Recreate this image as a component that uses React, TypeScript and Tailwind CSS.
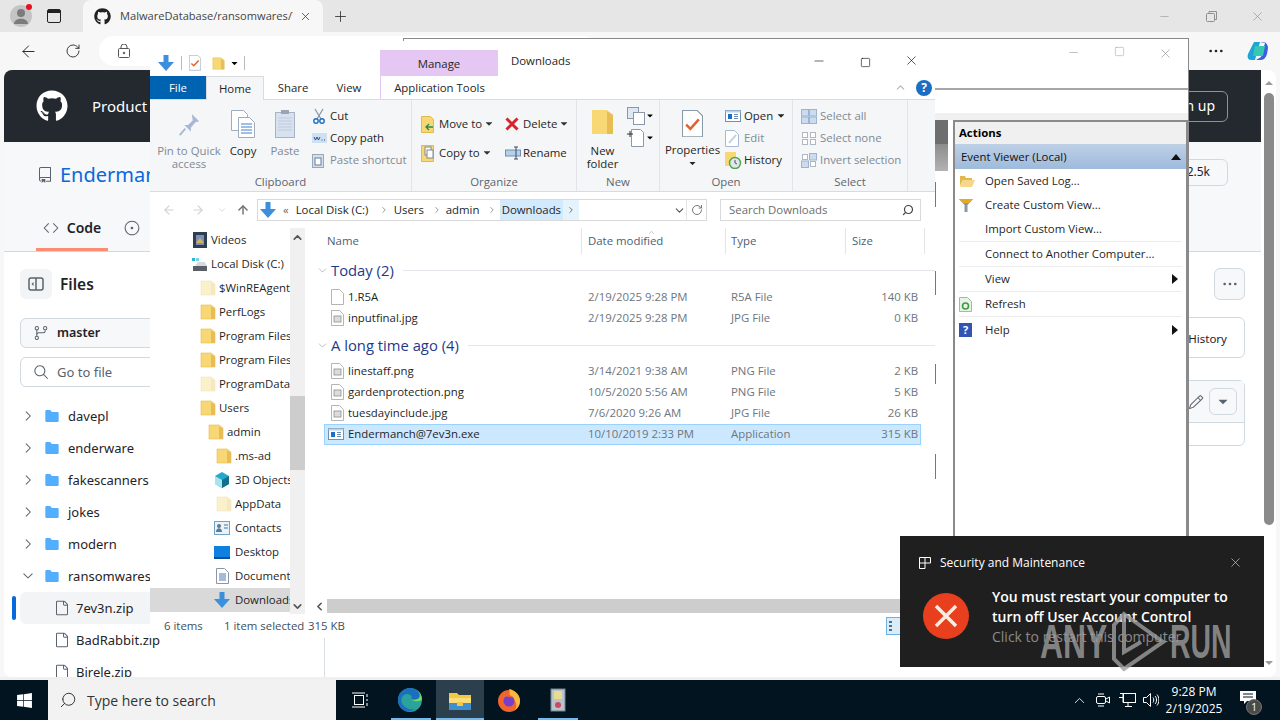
import type { ReactNode } from 'react';
import { ArrowLeft, ArrowRight, ArrowUp, ChevronDown, ChevronLeft, ChevronRight, ChevronUp, Minus, Plus, RotateCw, Search, Square, X } from 'lucide-react';
import { FaGithub, FaWindows } from 'react-icons/fa';
import { GoChevronDown, GoChevronRight, GoCode, GoFile, GoFileDirectoryFill, GoGitBranch, GoIssueOpened, GoKebabHorizontal, GoPencil, GoRepo, GoSearch, GoTriangleDown } from 'react-icons/go';

const Folder = ({ pale = false, size = 16 }: { pale?: boolean; size?: number }) => (
  <svg width={size} height={size} viewBox="0 0 16 16" className="shrink-0">
    <path d="M1 1h10l4 3v11H1z" fill={pale ? '#fbf0cc' : '#f8d775'} stroke={pale ? '#f1e4b8' : '#e5bd55'} strokeWidth="0.6" />
    <path d="M11 2v13h4V5z" fill={pale ? '#f6e8bc' : '#e9bd56'} />
  </svg>
);

const ImageFile = () => (
  <svg width="13" height="16" viewBox="0 0 13 16" className="shrink-0">
    <path d="M.5.5h8l4 4v11H.5z" fill="#fff" stroke="#b5b5b5" />
    <rect x="3" y="6" width="7" height="6" fill="#dcdcdc" stroke="#8e8e8e" strokeWidth="0.8" />
  </svg>
);

const BlankFile = () => (
  <svg width="13" height="16" viewBox="0 0 13 16" className="shrink-0">
    <path d="M.5.5h8l4 4v11H.5z" fill="#fff" stroke="#b5b5b5" />
  </svg>
);

const ExeFile = () => (
  <svg width="16" height="14" viewBox="0 0 16 14" className="shrink-0">
    <rect x="0.5" y="1.5" width="15" height="11" fill="#fff" stroke="#6f8fb5" />
    <rect x="0.5" y="1.5" width="15" height="2" fill="#b9d1ea" />
    <rect x="3" y="5" width="4" height="5" fill="#1c6fc9" />
    <path d="M9 5.5h4M9 7.5h4M9 9.5h4" stroke="#6d8bb0" />
  </svg>
);

const BlueDown = ({ size = 16 }: { size?: number }) => (
  <svg width={size} height={size} viewBox="0 0 16 16" className="shrink-0">
    <path d="M5.5 0h5v7H16l-8 9-8-9h5.5z" fill="#3b8fdc" />
  </svg>
);

const Props = ({ size = 16 }: { size?: number }) => (
  <svg width={size} height={size * 1.3} viewBox="0 0 20 26" className="shrink-0">
    <path d="M.5.5h14l5 5v20H.5z" fill="#fff" stroke="#8b9aa8" />
    <path d="M4 14l4 4 8-9" fill="none" stroke="#e2622b" strokeWidth="2.4" />
  </svg>
);

const Small = ({ kind }: { kind: string }) => {
  const c = 'shrink-0';
  if (kind === 'cut') return <svg width="14" height="16" viewBox="0 0 14 16" className={c}><path d="M3 1l6 10M11 1L5 11" stroke="#8793a0" strokeWidth="1.2" /><circle cx="4" cy="13" r="2.2" fill="none" stroke="#1d6fc2" strokeWidth="1.4" /><circle cx="10" cy="13" r="2.2" fill="none" stroke="#1d6fc2" strokeWidth="1.4" /></svg>;
  if (kind === 'path') return <svg width="15" height="10" viewBox="0 0 15 10" className={c}><rect width="15" height="10" fill="#cfe0f3" /><path d="M2 4l1.5 3L5 4l1.5 3L8 4M9.5 7h1M12 7h1" stroke="#274f7f" fill="none" /></svg>;
  if (kind === 'shortcut') return <svg width="12" height="15" viewBox="0 0 12 15" className={c}><rect x=".5" y="1.5" width="11" height="13" fill="#d8dfe7" stroke="#9aa7b5" /><rect x="3" y="5" width="6" height="7" fill="#fff" stroke="#5b7ea8" /></svg>;
  if (kind === 'move') return <svg width="13" height="17" viewBox="0 0 13 17" className={c}><path d="M.5.5h9l3 3v13H.5z" fill="#f8d775" stroke="#e0b94f" /><path d="M12 11H6M8 8l-3 3 3 3" stroke="#2d8a4e" strokeWidth="1.4" fill="none" /></svg>;
  if (kind === 'copy') return <svg width="13" height="17" viewBox="0 0 13 17" className={c}><path d="M.5.5h12v16H.5z" fill="#f8d775" stroke="#e0b94f" /><rect x="4" y="2" width="6" height="8" fill="#fff" stroke="#7c8a99" /><rect x="6" y="5" width="6" height="8" fill="#fff" stroke="#7c8a99" /></svg>;
  if (kind === 'delete') return <svg width="14" height="14" viewBox="0 0 14 14" className={c}><path d="M1.5 1.5l11 11M12.5 1.5l-11 11" stroke="#d8232a" strokeWidth="3" /></svg>;
  if (kind === 'rename') return <svg width="16" height="14" viewBox="0 0 16 14" className={c}><rect x=".5" y="4" width="15" height="6" fill="#b7cfe8" stroke="#6e8fb3" /><path d="M11 1v12M9 1h4M9 13h4" stroke="#3a4a5a" /></svg>;
  if (kind === 'open') return <ExeFile />;
  if (kind === 'edit') return <svg width="15" height="17" viewBox="0 0 15 17" className={c}><path d="M.5.5h9l4 4v12H.5z" fill="#fff" stroke="#a7bad0" /><path d="M4 13l7-8" stroke="#c6d5e5" strokeWidth="2" /></svg>;
  if (kind === 'history') return <svg width="17" height="17" viewBox="0 0 17 17" className={c}><path d="M0 0h11v14H0z" fill="#f8d775" /><circle cx="10" cy="11" r="5.5" fill="#dfe7ec" stroke="#53a04d" strokeWidth="1.4" /><path d="M10 8v3l2 1" stroke="#4a5661" fill="none" /></svg>;
  if (kind === 'all') return <svg width="16" height="15" viewBox="0 0 16 15" className={c}><rect x=".5" y=".5" width="7" height="6.5" fill="#cbdcf0" stroke="#9cb4d0" /><rect x="8.5" y=".5" width="7" height="6.5" fill="#cbdcf0" stroke="#9cb4d0" /><rect x=".5" y="8" width="7" height="6.5" fill="#cbdcf0" stroke="#9cb4d0" /><rect x="8.5" y="8" width="7" height="6.5" fill="#cbdcf0" stroke="#9cb4d0" /></svg>;
  if (kind === 'none') return <svg width="16" height="15" viewBox="0 0 16 15" className={c}><rect x="1.5" y="1.5" width="5" height="5" fill="#fff" stroke="#adb8c4" /><rect x="9.5" y="1.5" width="5" height="5" fill="#fff" stroke="#adb8c4" /><rect x="1.5" y="8.5" width="5" height="5" fill="#fff" stroke="#adb8c4" /><rect x="9.5" y="8.5" width="5" height="5" fill="#fff" stroke="#adb8c4" /></svg>;
  return <svg width="16" height="15" viewBox="0 0 16 15" className={c}><rect x="1.5" y="1.5" width="5" height="5" fill="#fff" stroke="#adb8c4" /><rect x="8.5" y=".5" width="7" height="6.5" fill="#cbdcf0" stroke="#9cb4d0" /><rect x=".5" y="8" width="7" height="6.5" fill="#cbdcf0" stroke="#9cb4d0" /><rect x="9.5" y="8.5" width="5" height="5" fill="#fff" stroke="#adb8c4" /></svg>;
};

const SmallRow = ({ kind, label, off = false, caret = false }: { kind: string; label: string; off?: boolean; caret?: boolean }) => (
  <div className={`flex h-[22px] items-center whitespace-nowrap ${off ? 'text-[#7f8a95]' : 'text-[#262626]'}`}>
    <div className="flex w-[18px] shrink-0 items-center justify-start"><Small kind={kind} /></div>
    <span>{label}</span>
    {caret && <GoTriangleDown className="ml-[1px] text-[#333]" size={12} />}
  </div>
);

const Group = ({ width, label, children }: { width: number; label: string; children: ReactNode }) => (
  <div className="flex h-full shrink-0 flex-col border-r border-[#e2e4e7]" style={{ width }}>
    <div className="flex h-[75px] pt-[5px]">{children}</div>
    <div className="text-center leading-[14px] text-[#5d6570]">{label}</div>
  </div>
);

const Ribbon = () => (
  <div className="flex h-[92px] shrink-0 border-b border-[#dadbdc] bg-[#f5f6f7]">
    <Group width={262} label="Clipboard">
      <div className="flex w-[78px] flex-col items-center text-center leading-[13px] text-[#7f8a95]">
        <svg width="24" height="24" viewBox="0 0 26 26" className="mt-[8px] mb-[7px]"><path d="M16 1l8 8-4 1-5 6 0 4-7-7 4 0 5-5z" fill="#a9b7d4" /><path d="M9 17l-6 7" stroke="#a9b7d4" strokeWidth="2" /></svg>
        <span>Pin to Quick</span><span>access</span>
      </div>
      <div className="flex w-[30px] flex-col items-center text-[#262626]">
        <svg width="24" height="28" viewBox="0 0 24 28" className="mt-[5px] mb-[6px]"><path d="M.5.5h12l4 4v16H.5z" fill="#fff" stroke="#9eacbb" /><path d="M7.5 7.5h11l5 5v15h-16z" fill="#fff" stroke="#9eacbb" /><path d="M10 14h11M10 17h11M10 20h11M10 23h11" stroke="#3e7fd1" /></svg>
        <span className="leading-[13px]">Copy</span>
      </div>
      <div className="flex w-[54px] flex-col items-center text-[#7f8a95]">
        <svg width="20" height="28" viewBox="0 0 20 28" className="mt-[5px] mb-[6px]"><rect x=".5" y="2.5" width="19" height="25" fill="#d7e1ef" stroke="#a9b4c2" /><rect x="6" y="0" width="8" height="4" fill="#9aa5b3" /><path d="M3 8h14M3 11h14M3 14h14M3 17h14M3 20h14" stroke="#c0cbdc" /></svg>
        <span className="leading-[13px]">Paste</span>
      </div>
      <div className="flex flex-col">
        <SmallRow kind="cut" label="Cut" />
        <SmallRow kind="path" label="Copy path" />
        <SmallRow kind="shortcut" label="Paste shortcut" off />
      </div>
    </Group>
    <Group width={165} label="Organize">
      <div className="flex w-[93px] flex-col pt-[8px] pl-[9px]">
        <SmallRow kind="move" label="Move to" caret />
        <div className="h-[7px]" />
        <SmallRow kind="copy" label="Copy to" caret />
      </div>
      <div className="flex flex-col pt-[8px]">
        <SmallRow kind="delete" label="Delete" caret />
        <div className="h-[7px]" />
        <SmallRow kind="rename" label="Rename" />
      </div>
    </Group>
    <Group width={83} label="New">
      <div className="ml-[1px] flex w-[49px] flex-col items-center leading-[13px] text-[#262626]">
        <svg width="21" height="28" viewBox="0 0 21 28" className="mt-[5px] mb-[6px]"><path d="M0 0h15l6 5v19H0z" fill="#f8d775" /><path d="M15 1v23h6V5z" fill="#e9bd56" /></svg>
        <span>New</span><span>folder</span>
      </div>
      <div className="flex flex-col gap-[4px] pt-[2px]">
        <div className="flex items-center"><svg width="18" height="18" viewBox="0 0 18 18"><rect x=".5" y=".5" width="11" height="11" fill="#dfe8f2" stroke="#8a98a7" /><rect x="6.5" y="5.5" width="11" height="12" fill="#fff" stroke="#8a98a7" /></svg><GoTriangleDown size={10} /></div>
        <div className="flex items-center"><svg width="18" height="18" viewBox="0 0 18 18"><path d="M4.5.5h9l3 3v14h-12z" fill="#fff" stroke="#8a98a7" /><path d="M0 5h6M3 2v6" stroke="#333" /></svg><GoTriangleDown size={10} /></div>
      </div>
    </Group>
    <Group width={133} label="Open">
      <div className="flex w-[65px] flex-col items-center leading-[13px] text-[#262626]">
        <div className="mt-[5px] mb-[5px] h-[28px]"><Props size={21} /></div>
        <span>Properties</span>
        <GoTriangleDown size={11} className="mt-[2px]" />
      </div>
      <div className="flex flex-col">
        <div className="flex h-[22px] items-center whitespace-nowrap text-[#262626]"><div className="w-[19px]"><Small kind="open" /></div><span>Open</span><GoTriangleDown size={12} className="ml-[2px]" /></div>
        <div className="flex h-[22px] items-center text-[#7f8a95]"><div className="w-[19px]"><Small kind="edit" /></div><span>Edit</span></div>
        <div className="flex h-[22px] items-center text-[#262626]"><div className="w-[19px]"><Small kind="history" /></div><span>History</span></div>
      </div>
    </Group>
    <Group width={115} label="Select">
      <div className="flex flex-col pl-[8px] text-[#7f8a95]">
        {[['all', 'Select all'], ['none', 'Select none'], ['invert', 'Invert selection']].map(([k, t]) => (
          <div key={k} className="flex h-[22px] items-center whitespace-nowrap"><div className="w-[19px]"><Small kind={k} /></div><span>{t}</span></div>
        ))}
      </div>
    </Group>
  </div>
);

const TreeIcon = ({ kind }: { kind: string }) => {
  if (kind === 'video') return <svg width="16" height="16" viewBox="0 0 16 16"><rect x="1" width="14" height="16" fill="#2c3e50" /><rect x="4" y="3" width="8" height="10" fill="#7e8fb8" /><path d="M4 11l4-5 4 5z" fill="#d0b35a" /></svg>;
  if (kind === 'disk') return <svg width="16" height="16" viewBox="0 0 16 16"><rect x="1" y="10" width="14" height="5" fill="#5a5f66" /><path d="M3 10l3-4h7l2 4z" fill="#d5dade" /><rect x="0" y="2" width="3" height="3" fill="#2fb4d6" /><rect x="4" y="2" width="3" height="3" fill="#7ed0e6" /></svg>;
  if (kind === 'cube') return <svg width="16" height="16" viewBox="0 0 16 16"><path d="M8 0l7 4v8l-7 4-7-4V4z" fill="#25a9c9" /><path d="M1 4l7 4v8l-7-4z" fill="#a8e4f0" /><path d="M15 4l-7 4v8l7-4z" fill="#12708d" /></svg>;
  if (kind === 'contacts') return <svg width="16" height="14" viewBox="0 0 16 14"><rect x=".5" y=".5" width="15" height="13" fill="#eaf2f8" stroke="#6fa3c7" /><circle cx="5" cy="5" r="2" fill="#5c7a91" /><path d="M2 11c0-5 6-5 6 0z" fill="#5c7a91" /><path d="M10 4h4M10 7h4" stroke="#3a7db1" /></svg>;
  if (kind === 'desktop') return <svg width="16" height="13" viewBox="0 0 16 13"><rect width="16" height="13" fill="#0f7fe0" /><rect y="11" width="16" height="2" fill="#0a4f9c" /></svg>;
  if (kind === 'docs') return <svg width="13" height="16" viewBox="0 0 13 16"><path d="M.5.5h8l4 4v11H.5z" fill="#fff" stroke="#8a96a3" /><path d="M3 6h7M3 8h7M3 10h7M3 12h7" stroke="#4b7bb0" /></svg>;
  if (kind === 'down') return <BlueDown />;
  return <Folder pale={kind === 'pale'} />;
};

const treeRows = [
  { label: 'Videos', indent: 42, kind: 'video' },
  { label: 'Local Disk (C:)', indent: 42, kind: 'disk' },
  { label: '$WinREAgent', indent: 50, kind: 'pale' },
  { label: 'PerfLogs', indent: 50, kind: 'folder' },
  { label: 'Program Files', indent: 50, kind: 'folder' },
  { label: 'Program Files (x86)', indent: 50, kind: 'folder' },
  { label: 'ProgramData', indent: 50, kind: 'pale' },
  { label: 'Users', indent: 50, kind: 'folder' },
  { label: 'admin', indent: 58, kind: 'folder' },
  { label: '.ms-ad', indent: 66, kind: 'folder' },
  { label: '3D Objects', indent: 64, kind: 'cube' },
  { label: 'AppData', indent: 66, kind: 'pale' },
  { label: 'Contacts', indent: 64, kind: 'contacts' },
  { label: 'Desktop', indent: 64, kind: 'desktop' },
  { label: 'Documents', indent: 66, kind: 'docs' },
  { label: 'Downloads', indent: 64, kind: 'down' },
];

const FileRow = ({ icon, name, date, type, size, active = false }: { icon: ReactNode; name: string; date: string; type: string; size: string; active?: boolean }) => (
  <div className={`ml-[14px] grid h-[21px] w-[597px] grid-cols-[257px_143px_120px_73px] items-center border pb-[2px] text-[#6d7680] ${active ? 'border-[#99d1ff] bg-[#cce8ff]' : 'border-transparent'}`}>
    <div className="flex items-center text-[#1f1f1f]">
      <div className="flex w-[23px] justify-end pr-[4px]">{icon}</div>
      <span>{name}</span>
    </div>
    <span className="pl-[6px]">{date}</span>
    <span className="pl-[6px]">{type}</span>
    <span className="text-right">{size}</span>
  </div>
);

const GroupHead = ({ label, h }: { label: string; h: number }) => (
  <div className="flex items-center pl-[6px] text-[#1e3a8a]" style={{ height: h }}>
    <ChevronDown size={13} strokeWidth={1} className="text-[#7a8794]" />
    <span className="ml-[2px] text-[14.8px] leading-none whitespace-nowrap">{label}</span>
    <div className="ml-[9px] h-px w-full flex-1 bg-[#e3e6ea]" />
  </div>
);

const Explorer = () => (
  <div className="absolute top-[41px] left-[150px] flex h-[597px] w-[785px] flex-col bg-white font-['Open_Sans',sans-serif] text-[11.4px] leading-none">
    <div className="flex h-[35px] shrink-0 items-end">
      <div className="flex h-[26px] w-[230px] items-center pl-[8px]">
        <BlueDown size={16} />
        <div className="mx-[7px] h-[14px] w-px bg-[#bbb]" />
        <Props size={12} />
        <div className="ml-[11px]"><Folder size={13} /></div>
        <GoTriangleDown size={11} className="ml-[4px] text-black" />
        <div className="ml-[4px] h-[14px] w-px bg-[#bbb]" />
      </div>
      <div className="flex h-[26px] w-[118px] items-center justify-center bg-[#e4c8f3] pt-[1px] text-[#262626]">Manage</div>
      <div className="flex h-[35px] items-center pt-[5px] pl-[13px] text-[#262626]">Downloads</div>
      <div className="ml-auto flex h-[35px] items-end pr-[1px] pb-[8px]">
        <div className="flex w-[46px] justify-center"><Minus size={14} strokeWidth={1} /></div>
        <div className="flex w-[46px] justify-center"><Square size={11} strokeWidth={1.3} /></div>
        <div className="flex w-[46px] justify-center"><X size={15} strokeWidth={1} /></div>
      </div>
    </div>
    <div className="flex h-[24px] shrink-0 items-stretch border-b border-[#dadbdc] text-[#262626]">
      <div className="flex w-[56px] items-center justify-center bg-[#0063b1] pt-[1px] text-white">File</div>
      <div className="-mb-px flex w-[58px] items-center justify-center border-x border-t border-[#dadbdc] bg-[#f5f6f7] pt-[1px]">Home</div>
      <div className="flex w-[58px] items-center justify-center pt-[1px]">Share</div>
      <div className="flex w-[54px] items-center justify-center pt-[1px]">View</div>
      <div className="w-[4px]" />
      <div className="flex w-[118px] items-center justify-center border-l border-[#e4c8f3] pt-[1px]">Application Tools</div>
      <div className="ml-auto flex items-center pr-[3px]">
        <ChevronUp size={13} className="mr-[9px] text-[#b5b5b5]" />
        <div className="flex h-[16px] w-[16px] items-center justify-center rounded-full bg-[#1a6fc2] text-[12px] font-bold text-white">?</div>
      </div>
    </div>
    <Ribbon />
    <div className="flex h-[36px] shrink-0 items-center text-[#9aa3ac]">
      <ArrowLeft size={14} className="ml-[12px] text-[#d0d3d6]" />
      <ArrowRight size={14} className="ml-[15px] text-[#d0d3d6]" />
      <ChevronDown size={10} className="ml-[12px] text-[#d0d3d6]" />
      <ArrowUp size={14} strokeWidth={2.4} className="ml-[9px] text-[#6d6d6d]" />
      <div className="ml-[7px] flex h-[22px] w-[450px] items-stretch border border-[#d9d9d9] text-[#262626]">
        <div className="flex items-center pl-[2px]"><BlueDown /></div>
        <span className="ml-[7px] flex items-center text-[#666]">«</span>
        <span className="ml-[7px] flex w-[78px] items-center whitespace-nowrap">Local Disk (C:)</span>
        <ChevronRight size={10} className="mx-[5px] self-center text-[#888]" />
        <span className="flex w-[34px] items-center">Users</span>
        <ChevronRight size={10} className="mx-[4px] self-center text-[#888]" />
        <span className="flex w-[38px] items-center">admin</span>
        <ChevronRight size={10} className="mx-[3px] self-center text-[#888]" />
        <span className="flex items-center bg-[#d3eafd] px-[2px]">Downloads</span>
        <div className="flex w-[16px] items-center justify-center bg-[#e5f3fc]"><ChevronRight size={10} className="text-[#555]" /></div>
        <div className="ml-auto flex items-center"><ChevronDown size={13} className="text-[#555]" /><div className="mr-[1px] h-full w-px bg-[#e5e5e5]" /><RotateCw size={12} className="mx-[3px] text-[#777]" /></div>
      </div>
      <div className="ml-[13px] flex h-[22px] w-[201px] items-center border border-[#d9d9d9] pr-[6px] pl-[8px] text-[#6d6d6d]">
        <span>Search Downloads</span>
        <Search size={12} strokeWidth={2.4} className="ml-auto -scale-x-100 text-[#444]" />
      </div>
    </div>
    <div className="flex min-h-0 flex-1">
      <div className="flex w-[140px] shrink-0 flex-col overflow-hidden text-[#1f1f1f]">
        {treeRows.map(r => (
          <div key={r.label} className={`flex h-[24px] shrink-0 items-center overflow-hidden whitespace-nowrap ${r.label === 'Downloads' ? 'bg-[#d9d9d9]' : ''}`} style={{ paddingLeft: r.indent }}>
            <div className={`flex shrink-0 ${r.indent === 64 ? 'w-[21px]' : 'w-[19px]'}`}><TreeIcon kind={r.kind} /></div>
            <span>{r.label}</span>
          </div>
        ))}
      </div>
      <div className="flex w-[15px] shrink-0 flex-col bg-[#f0f0f0]">
        <div className="flex h-[18px] items-center justify-center"><ChevronUp size={13} strokeWidth={3} className="text-[#555]" /></div>
        <div className="mt-[150px] h-[74px] bg-[#cdcdcd]" />
        <div className="mt-auto flex h-[16px] items-center justify-center"><ChevronDown size={13} strokeWidth={3} className="text-[#555]" /></div>
      </div>
      <div className="flex min-w-0 flex-1 flex-col pl-[5px]">
        <div className="grid h-[26px] shrink-0 grid-cols-[271px_144px_120px_80px] items-center text-[#4c607a]">
          <span className="pl-[17px]">Name</span>
          <span className="relative flex h-full items-center border-l border-[#e5e5e5] pl-[6px]">
            Date modified
            <ChevronUp size={9} strokeWidth={1.2} className="absolute top-0 left-[65px] text-[#8a8a8a]" />
          </span>
          <span className="flex h-full items-center border-l border-[#e5e5e5] pl-[5px]">Type</span>
          <span className="flex h-full items-center border-x border-[#e5e5e5] pl-[6px]">Size</span>
        </div>
        <GroupHead label="Today (2)" h={33} />
        <FileRow icon={<BlankFile />} name="1.R5A" date="2/19/2025 9:28 PM" type="R5A File" size="140 KB" />
        <FileRow icon={<ImageFile />} name="inputfinal.jpg" date="2/19/2025 9:28 PM" type="JPG File" size="0 KB" />
        <GroupHead label="A long time ago (4)" h={32} />
        <FileRow icon={<ImageFile />} name="linestaff.png" date="3/14/2021 9:38 AM" type="PNG File" size="2 KB" />
        <FileRow icon={<ImageFile />} name="gardenprotection.png" date="10/5/2020 5:56 AM" type="PNG File" size="5 KB" />
        <FileRow icon={<ImageFile />} name="tuesdayinclude.jpg" date="7/6/2020 9:26 AM" type="JPG File" size="26 KB" />
        <FileRow icon={<ExeFile />} name="Endermanch@7ev3n.exe" date="10/10/2019 2:33 PM" type="Application" size="315 KB" active />
        <div className="mt-auto mb-px flex h-[14px] shrink-0 items-center pl-[2px]">
          <div className="flex w-[15px] justify-center"><ChevronLeft size={13} strokeWidth={3} className="text-[#555]" /></div>
          <div className="h-full flex-1 bg-[#cdcdcd]" />
        </div>
      </div>
    </div>
    <div className="flex h-[24px] shrink-0 items-center text-[#3d4f5f]">
      <span className="ml-[14px] w-[60px]">6 items</span>
      <span className="w-[84px] whitespace-nowrap">1 item selected</span>
      <span>315 KB</span>
      <div className="mr-[34px] ml-auto flex h-[18px] w-[15px] flex-col justify-center gap-[2px] border border-[#6eb3e6] bg-[#d8ecfa] pl-[2px]">
        <div className="h-[2px] w-[3px] bg-[#5b6b7b]" />
        <div className="h-[2px] w-[3px] bg-[#5b6b7b]" />
        <div className="h-[2px] w-[3px] bg-[#5b6b7b]" />
      </div>
    </div>
  </div>
);

const ActionRow = ({ icon, label, arrow = false, line = false, tight = false }: { icon?: ReactNode; label: string; arrow?: boolean; line?: boolean; tight?: boolean }) => (
  <div className={`mx-[4px] flex items-center ${tight ? 'h-[24px]' : 'h-[25px]'} ${line ? 'border-b border-[#ececec]' : ''}`}>
    <div className="flex w-[26px] shrink-0 justify-start">{icon}</div>
    <span className="whitespace-nowrap text-[#1f1f1f]">{label}</span>
    {arrow && <svg width="6" height="10" viewBox="0 0 6 10" className="mr-[4px] ml-auto"><path d="M0 0l6 5-6 5z" fill="#111" /></svg>}
  </div>
);

const EventViewer = () => (
  <div className="absolute top-[38px] left-[403px] flex h-[592px] w-[786px] flex-col border border-[#8a8a8a] bg-white font-['Open_Sans',sans-serif] text-[11.4px] leading-none">
    <div className="flex h-[51px] shrink-0 justify-end border-b-2 border-[#a6a6a6] pt-[7px] text-[#8c8c8c]">
      <div className="flex w-[46px] justify-center"><Minus size={13} strokeWidth={1} /></div>
      <div className="flex w-[46px] justify-center"><Square size={11} strokeWidth={1} /></div>
      <div className="flex w-[46px] justify-center"><X size={15} strokeWidth={1} /></div>
    </div>
    <div className="h-[23px] shrink-0 bg-white" />
    <div className="h-[7px] shrink-0 bg-[#f0f0f0]" />
    <div className="flex min-h-0 flex-1 justify-end">
      <div className="mr-[5px] flex w-[13px] shrink-0 flex-col">
        <div className="h-[24px] bg-[#6e6e6e]" />
        <div className="h-[27px] bg-linear-to-b from-[#8c8c8c] to-[#b3b3b3]" />
        <div className="mt-[11px] h-[25px] w-px bg-[#777]" />
        <div className="mt-[64px] h-[24px] w-px bg-[#777]" />
        <div className="mt-[69px] h-[20px] w-px bg-[#777]" />
        <div className="mt-[70px] h-[25px] w-px bg-[#777]" />
      </div>
      <div className="flex w-[235px] shrink-0 flex-col border-x-2 border-t-2 border-[#8a8a8a] bg-white">
        <div className="flex h-[22px] shrink-0 items-center bg-[#f0f0f0] pl-[4px] font-bold text-black">Actions</div>
        <div className="flex h-[25px] shrink-0 items-center justify-between bg-linear-to-b from-[#bdd0e6] to-[#9fbadb] pt-[1px] pr-[5px] pl-[6px] text-[#111]">
          <span>Event Viewer (Local)</span>
          <svg width="10" height="6" viewBox="0 0 10 6"><path d="M0 6l5-6 5 6z" fill="#111" /></svg>
        </div>
        <div className="flex flex-col">
          <ActionRow tight label="Open Saved Log..." icon={<svg width="16" height="12" viewBox="0 0 16 12"><path d="M1 1h5l1 2h6v2H4L1 11z" fill="#e0b84f" /><path d="M4 5h12l-3 7H1z" fill="#f4d789" /></svg>} />
          <ActionRow tight label="Create Custom View..." icon={<svg width="14" height="14" viewBox="0 0 14 14"><path d="M0 1h14L8.5 7v7h-3V7z" fill="#8a98a6" /><path d="M0 1h14L10 5H4z" fill="#e6a920" /></svg>} />
          <ActionRow label="Import Custom View..." line />
          <ActionRow label="Connect to Another Computer..." line />
          <ActionRow label="View" arrow line />
          <ActionRow label="Refresh" line icon={<svg width="13" height="15" viewBox="0 0 13 15"><path d="M.5.5h8l4 4v10H.5z" fill="#e7f3e5" stroke="#a5b9a2" /><circle cx="6.5" cy="9" r="3" fill="none" stroke="#3f9a45" strokeWidth="1.6" /></svg>} />
          <ActionRow label="Help" arrow icon={<div className="flex h-[14px] w-[13px] items-center justify-center bg-[#3255b5] text-[11px] font-bold text-white">?</div>} />
        </div>
        <div className="flex-1" />
      </div>
    </div>
  </div>
);

const ghTree = ['davepl', 'enderware', 'fakescanners', 'jokes', 'modern'];

const GitHubPage = () => (
  <div className="mx-[4px] flex h-[607px] overflow-hidden rounded-lg bg-white font-['Noto_Sans',sans-serif] text-[13px] leading-none text-[#1f2328]">
    <div className="flex w-[1257px] shrink-0 flex-col">
      <div className="flex h-[72px] shrink-0 items-center bg-[#24292f] pr-[33px] pl-[32px] text-white">
        <FaGithub size={32} />
        <span className="ml-[24px] text-[15px]">Product</span>
        <div className="ml-auto flex h-[31px] w-[90px] items-center justify-end rounded-md border border-[#8b949e] pr-[12px] text-[14px]">Sign up</div>
      </div>
      <div className="flex h-[63px] shrink-0 items-center justify-between bg-[#f6f8fa] pr-[33px] pl-[33px]">
        <div className="mt-[2px] flex items-center">
          <GoRepo size={16} className="text-[#59636e]" />
          <span className="ml-[7px] text-[20px] text-[#0969da]">Enderman</span>
        </div>
        <div className="-mt-[3px] flex h-[27px] w-[60px] items-center justify-end rounded-md border border-[#d1d9e0] bg-[#f6f8fa] pr-[17px] text-[12px]">2.5k</div>
      </div>
      <div className="flex h-[47px] shrink-0 border-b border-[#d1d9e0] bg-[#f6f8fa] pl-[32px]">
        <div className="flex w-[72px] items-center justify-center border-b-[3px] border-[#fd8c73] pt-[2px]">
          <GoCode size={16} className="text-[#59636e]" />
          <span className="ml-[8px] text-[14px] font-semibold">Code</span>
        </div>
        <div className="ml-[16px] flex items-center"><GoIssueOpened size={16} className="text-[#59636e]" /></div>
      </div>
      <div className="flex min-h-0 flex-1 justify-between">
        <div className="flex w-[321px] shrink-0 flex-col overflow-hidden border-r border-[#d8dee4] pt-[17px] pl-[16px]">
          <div className="flex h-[32px] shrink-0 items-center">
            <div className="-mt-[2px] flex h-[30px] w-[32px] items-center justify-center rounded-md bg-[#f3f4f6]">
              <svg width="16" height="16" viewBox="0 0 16 16" fill="none" stroke="#59636e" strokeWidth="1.5"><rect x="1" y="2" width="14" height="12" rx="2" /><path d="M8 2v12" /><path d="M5.5 6v4L3.5 8z" fill="#59636e" stroke="none" /></svg>
            </div>
            <span className="ml-[8px] text-[15.500px] font-semibold">Files</span>
          </div>
          <div className="mt-[17px] flex h-[30px] w-[300px] shrink-0 items-center rounded-md border border-[#d1d9e0] bg-[#f6f8fa] pl-[12px] font-semibold">
            <GoGitBranch size={16} className="text-[#59636e]" />
            <span className="ml-[8px] text-[12.500px]">master</span>
          </div>
          <div className="mt-[9px] flex h-[30px] w-[300px] shrink-0 items-center rounded-md border border-[#d1d9e0] pl-[12px] text-[#59636e]">
            <GoSearch size={16} />
            <span className="ml-[8px]">Go to file</span>
          </div>
          <div className="mt-[13px] flex flex-col">
            {ghTree.map(t => (
              <div key={t} className="flex h-[32px] shrink-0 items-center">
                <GoChevronRight size={16} className="text-[#59636e]" />
                <GoFileDirectoryFill size={16} className="ml-[8px] text-[#54aeff]" />
                <span className="ml-[8px] text-[#1f2328]">{t}</span>
              </div>
            ))}
            <div className="flex h-[32px] shrink-0 items-center">
              <GoChevronDown size={16} className="text-[#59636e]" />
              <GoFileDirectoryFill size={16} className="ml-[8px] text-[#54aeff]" />
              <span className="ml-[8px]">ransomwares</span>
            </div>
            <div className="relative flex h-[32px] shrink-0 items-center rounded-md bg-[#f3f4f6] pl-[34px]">
              <div className="absolute top-[4px] -left-[8px] h-[24px] w-[4px] rounded bg-[#0969da]" />
              <GoFile size={16} className="text-[#59636e]" />
              <span className="ml-[6px]">7ev3n.zip</span>
            </div>
            {['BadRabbit.zip', 'Birele.zip'].map(t => (
              <div key={t} className="flex h-[32px] shrink-0 items-center pl-[34px]">
                <GoFile size={16} className="text-[#59636e]" />
                <span className="ml-[6px]">{t}</span>
              </div>
            ))}
          </div>
        </div>
        <div className="flex w-[200px] shrink-0 flex-col items-end pt-[16px] pr-[16px]">
          <div className="flex h-[32px] w-[31px] items-center justify-center rounded-md border border-[#d1d9e0] bg-[#f6f8fa] text-[#59636e]"><GoKebabHorizontal size={16} /></div>
          <div className="mt-[17px] flex h-[41px] w-[120px] items-center justify-end rounded-md border border-[#d1d9e0] pt-[2px] pr-[17px] text-[11.500px]">History</div>
          <div className="mt-[22px] flex w-[160px] flex-col rounded-md border border-[#d1d9e0]">
            <div className="flex h-[42px] items-center justify-end border-b border-[#d1d9e0] bg-[#f6f8fa] pr-[7px]">
              <GoPencil size={16} className="mr-[5px] text-[#59636e]" />
              <div className="flex h-[27px] w-[28px] items-center justify-center rounded-md border border-[#d1d9e0]"><GoTriangleDown size={16} className="text-[#59636e]" /></div>
            </div>
            <div className="h-[22px]" />
          </div>
        </div>
      </div>
    </div>
    <div className="flex flex-1 flex-col items-center pt-[6px] pb-[7px]">
      <GoTriangleDown size={14} className="rotate-180 text-[#9a9a9a]" />
      <div className="mt-[3px] h-[432px] w-[10px] rounded-full bg-[#8a8a8a]" />
      <GoTriangleDown size={14} className="mt-auto text-[#9a9a9a]" />
    </div>
  </div>
);

const Notification = () => (
  <div className="absolute top-[536px] left-[900px] h-[131px] w-[364px] overflow-hidden bg-[#1f1f1f] font-['Open_Sans',sans-serif] text-white">
    <div className="flex h-[51px] items-center pt-[2px] pr-[21px] pl-[19px] text-[12px]">
      <svg width="12" height="12" viewBox="0 0 12 12" fill="none" stroke="#fff"><path d="M.5 .5h5.500v11H.5zM6 .5h5.500v5.500H.5" /></svg>
      <span className="ml-[9px]">Security and Maintenance</span>
      <X size={15} strokeWidth={1} className="ml-auto text-[#ddd]" />
    </div>
    <div className="flex pl-[23px]">
      <svg width="46" height="46" viewBox="0 0 46 46" className="mt-[6px] shrink-0"><circle cx="23" cy="23" r="23" fill="#e8401f" /><path d="M13 13l20 20M33 13L13 33" stroke="#fbeee0" strokeWidth="3.4" /></svg>
      <div className="ml-[23px] flex flex-col text-[14px] leading-[20px]">
        <span className="font-semibold whitespace-nowrap">You must restart your computer to</span>
        <span className="font-semibold whitespace-nowrap">turn off User Account Control</span>
        <span className="whitespace-nowrap text-[#8a8a8a]">Click to restart this computer</span>
      </div>
    </div>
  </div>
);

const Watermark = () => (
  <div className="pointer-events-none absolute top-[610px] left-[1040px] flex h-[62px] w-[192px] items-center text-[#9e9e9e]/80">
    <span className="w-[72px] origin-left scale-x-[0.65] font-['Liberation_Sans',sans-serif] text-[49px] leading-none font-bold">ANY</span>
    <svg width="58" height="62" viewBox="0 0 58 62" fill="none" stroke="currentColor" strokeWidth="4" className="shrink-0"><path d="M12 4l39 28-39 27L2 49V15zM12 4v38l17-10" /></svg>
    <span className="w-[62px] origin-left scale-x-[0.58] font-['Liberation_Sans',sans-serif] text-[49px] leading-none font-bold">RUN</span>
  </div>
);

const Taskbar = () => (
  <div className="flex h-[40px] shrink-0 bg-[#01141f] font-['Open_Sans',sans-serif] text-white">
    <div className="flex w-[48px] items-center justify-center"><FaWindows size={17} /></div>
    <div className="flex w-[288px] items-center bg-[#f2f2f2] pl-[11px] text-[14px] text-[#333]">
      <Search size={18} strokeWidth={1.3} className="-scale-x-100" />
      <span className="ml-[10px]">Type here to search</span>
    </div>
    <div className="flex w-[48px] items-center justify-center">
      <svg width="17" height="16" viewBox="0 0 17 16" fill="none" stroke="#fff"><rect x="2.5" y="3.5" width="9" height="9" /><path d="M0 1h13M0 15h13M15 2v3M15 7v2M15 11v3" /></svg>
    </div>
    <div className="relative flex w-[52px] items-center justify-center">
      <svg width="24" height="24" viewBox="0 0 24 24"><circle cx="12" cy="12" r="12" fill="#2aa39a" /><path d="M0 12C0 5 6 0 12 0c7 0 12 5 12 12-3 2-9 2-11-1 3-3-3-7-7-4-3 2-4 7 0 11 3 3 7 4 11 3-3 2-6 3-9 2C3 22 0 17 0 12z" fill="#1a6fbf" /><path d="M24 12c0-7-5-12-12-12C18 0 24 5 21 10c-2 2-6 2-8 1 2 3 8 3 11 1z" fill="#6fdc6a" /></svg>
      <div className="absolute right-[5px] bottom-0 left-[7px] h-[2px] bg-[#76b9ed]" />
    </div>
    <div className="relative flex w-[48px] items-center justify-center bg-[#2c3f4d]">
      <svg width="22" height="19" viewBox="0 0 22 19"><path d="M0 2h8l2 2h12v15H0z" fill="#f5c842" /><rect y="7" width="22" height="12" fill="#f9dc7c" /><rect y="12" width="22" height="7" fill="#3f8fcf" /><rect x="8" y="11" width="6" height="4" fill="#f5c842" /></svg>
      <div className="absolute right-0 bottom-0 left-0 h-[2px] bg-[#76b9ed]" />
    </div>
    <div className="flex w-[50px] items-center justify-center">
      <svg width="24" height="24" viewBox="0 0 24 24"><circle cx="12" cy="13" r="11" fill="#f0642e" /><path d="M12 1c6 1 11 6 11 12 0 4-2 7-5 9 3-5 1-11-6-13 1-3 1-5 0-8z" fill="#fbb93b" /><circle cx="12" cy="13" r="5.500" fill="#7a3fc8" /><path d="M8 8c3-2 7-1 8 2-2-1-5-1-8-2z" fill="#f0642e" /></svg>
    </div>
    <div className="relative flex w-[47px] items-center justify-center">
      <svg width="16" height="24" viewBox="0 0 16 24"><rect x="1" y="1" width="14" height="22" fill="#b8c3cf" stroke="#76838f" /><rect x="4" y="3" width="8" height="8" fill="#e7dd91" /><circle cx="8" cy="17" r="3" fill="#d04a5b" /></svg>
      <div className="absolute right-[3px] bottom-0 left-[4px] h-[2px] bg-[#76b9ed]" />
    </div>
    <div className="ml-auto flex items-center">
      <div className="flex w-[24px] justify-center"><ChevronUp size={17} strokeWidth={1.2} /></div>
      <div className="flex w-[24px] justify-center"><svg width="14" height="16" viewBox="0 0 14 16" fill="none" stroke="#fff"><rect x=".5" y="4.500" width="9" height="7" rx="1.5" /><path d="M10 7l3.500-2v6L10 9M2 2h6M2 14h6" /></svg></div>
      <div className="flex w-[24px] justify-center"><svg width="17" height="14" viewBox="0 0 17 14" fill="none" stroke="#fff"><rect x="4.500" y=".5" width="12" height="9" /><path d="M0 4.500h4M1 .5h3v9M9 10v3M6 13.500h7" /></svg></div>
      <div className="flex w-[24px] justify-center"><svg width="16" height="14" viewBox="0 0 16 14" fill="none" stroke="#fff"><path d="M.5 4.500h3l4-4v13l-4-4h-3zM10 4.500c1 1.500 1 3.500 0 5M12 3c2 2 2 6 0 8M14 1.500c2.500 3 2.500 8 0 11" /></svg></div>
      <div className="flex w-[62px] flex-col items-center gap-[5px] text-[12px] leading-none">
        <span>9:28 PM</span>
        <span>2/19/2025</span>
      </div>
      <div className="relative flex h-full w-[55px] items-center pl-[15px]">
        <svg width="16" height="14" viewBox="0 0 16 14" className="-mt-[4px]"><path d="M0 0h16v10H7l-3 3v-3H0z" fill="#fff" /><path d="M3 3h10M3 6h10" stroke="#01141f" /></svg>
        <div className="absolute top-[19px] left-[21px] flex h-[16px] w-[16px] items-center justify-center rounded-full border border-[#777] bg-[#4a4a4a] text-[10px]">1</div>
      </div>
    </div>
  </div>
);

export default function App() {
  return (
    <div className="relative flex h-[720px] w-[1280px] flex-col overflow-hidden bg-[#f7f7f7]">
      <div className="flex h-[32px] shrink-0 items-end bg-[#e6e6e6] font-['Open_Sans',sans-serif] text-[11.1px] leading-none">
        <div className="flex h-full w-[83px] items-center pl-[10px]">
          <div className="relative flex h-[22px] w-[22px] items-center justify-center rounded-full bg-[#c4c4c4]">
            <svg width="16" height="18" viewBox="0 0 16 18"><circle cx="8" cy="6" r="4" fill="#7b7b7b" /><path d="M1 17c0-7 14-7 14 0z" fill="#7b7b7b" /></svg>
            <div className="absolute -top-[1px] right-0 h-[6px] w-[6px] rounded-full bg-[#e81123]" />
          </div>
          <div className="ml-[15px] flex h-[14px] w-[14px] flex-col rounded-[2px] border-[1.5px] border-[#222]"><div className="h-[3px] bg-[#222]" /></div>
        </div>
        <div className="flex h-[32px] w-[240px] items-center rounded-t-lg bg-[#f7f7f7] pr-[11px] pl-[11px] text-[#444]">
          <FaGithub size={17} className="text-[#222]" />
          <span className="ml-[9px] w-[173px] overflow-hidden whitespace-nowrap">MalwareDatabase/ransomwares/7ev3n.zip</span>
          <X size={13} strokeWidth={1.5} className="ml-auto text-[#444]" />
        </div>
        <div className="flex h-full items-center pl-[9px]"><Plus size={17} strokeWidth={1.2} className="text-[#333]" /></div>
        <div className="ml-auto flex h-full items-center text-[#8e8e8e]">
          <div className="flex w-[47px] justify-center"><Minus size={13} strokeWidth={1} /></div>
          <div className="flex w-[47px] justify-center"><svg width="11" height="11" viewBox="0 0 11 11" fill="none" stroke="#8e8e8e"><rect x=".5" y="2.500" width="8" height="8" rx="1" /><path d="M3 2.500V.5h7.500v8H8.500" /></svg></div>
          <div className="flex w-[45px] justify-center"><X size={15} strokeWidth={1} /></div>
        </div>
      </div>
      <div className="flex h-[38px] shrink-0 items-center bg-[#f7f7f7]">
        <ArrowLeft size={19} strokeWidth={1.2} className="ml-[19px] text-[#222]" />
        <RotateCw size={16} strokeWidth={1.3} className="ml-[27px] text-[#222]" />
        <div className="ml-[18px] flex h-[30px] w-[500px] items-center rounded-full bg-white pl-[19px]">
          <svg width="12" height="14" viewBox="0 0 12 14" fill="none" stroke="#555"><rect x=".5" y="4.500" width="11" height="9" rx="1" /><path d="M3 4.500V3a3 3 0 0 1 6 0v1.500" /><circle cx="6" cy="9" r=".8" fill="#555" /></svg>
        </div>
        <div className="ml-auto flex items-center pr-[11px]">
          <GoKebabHorizontal size={16} className="mr-[23px] text-[#222]" />
          <svg width="22" height="22" viewBox="0 0 22 22"><path d="M7 2h6l-5 18H4C1 20 0 17 1 14z" fill="#1fa4d8" /><path d="M9 20h5c3 0 5-3 6-6l1-6c0-3-2-6-5-6h-3l5 1-4 14z" fill="#3d5fe0" /><path d="M8 6h10l-2 10H6z" fill="#37c8b4" /></svg>
        </div>
      </div>
      <div className="min-h-0 flex-1">
        <GitHubPage />
      </div>
      <div className="h-[3px] shrink-0 bg-[#f0f0f0]" />
      <Taskbar />
      <EventViewer />
      <Explorer />
      <Notification />
      <Watermark />
    </div>
  );
}
